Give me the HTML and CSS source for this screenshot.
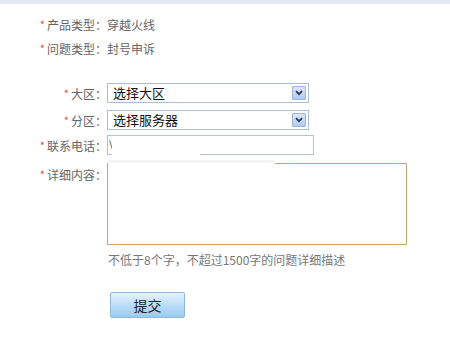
FILE: index.html
```html
<!DOCTYPE html>
<html lang="zh-CN">
<head>
<meta charset="utf-8">
<link rel="stylesheet" href="styles.css">
</head>
<body>
<div class="topbar"></div>
<div class="form">
  <div class="row info first">
    <div class="label"><span class="star">*</span>产品类型：</div>
    <div class="value">穿越火线</div>
  </div>
  <div class="row info">
    <div class="label"><span class="star">*</span>问题类型：</div>
    <div class="value">封号申诉</div>
  </div>
  <div class="row ctl sel1">
    <div class="label"><span class="star">*</span>大区：</div>
    <div class="select">
      <span class="sel-text">选择大区</span>
      <span class="arrow"><svg width="8" height="6" viewBox="0 0 8 6"><path d="M1 1.2 L4 4.2 L7 1.2" fill="none" stroke="#2d3a55" stroke-width="1.8"/></svg></span>
    </div>
  </div>
  <div class="row ctl sel2">
    <div class="label"><span class="star">*</span>分区：</div>
    <div class="select">
      <span class="sel-text">选择服务器</span>
      <span class="arrow"><svg width="8" height="6" viewBox="0 0 8 6"><path d="M1 1.2 L4 4.2 L7 1.2" fill="none" stroke="#2d3a55" stroke-width="1.8"/></svg></span>
    </div>
  </div>
  <div class="row ctl phone-row">
    <div class="label"><span class="star">*</span>联系电话：</div>
    <div class="input"><span class="caret">\</span></div>
    <div class="mask mask-a"></div>
    <div class="mask mask-b"></div>
  </div>
  <div class="row area-row">
    <div class="label"><span class="star">*</span>详细内容：</div>
    <div class="textarea"></div>
  </div>
  <div class="row help-row">
    <div class="label"></div>
    <div class="help">不低于8个字，不超过1500字的问题详细描述</div>
  </div>
  <div class="row btn-row">
    <div class="label"></div>
    <button class="submit">提交</button>
  </div>
</div>
</body>
</html>
```
FILE: styles.css
```css
html, body {
  margin: 0;
  padding: 0;
  background: #ffffff;
  font-family: "Noto Sans CJK SC", "Noto Sans", sans-serif;
  font-size: 12px;
  color: #666666;
}
.topbar {
  height: 4px;
  background: #e3e9f0;
}
.form {
  padding-left: 36px;
  position: relative;
}
.row {
  display: flex;
  align-items: center;
  position: relative;
}
.label {
  width: 71px;
  flex: none;
  text-align: right;
  white-space: nowrap;
  color: #666;
}
.star {
  color: #e8504a;
  font-size: 11px;
  margin-right: 2px;
  position: relative;
  top: -1px;
}
.info {
  height: 24px;
}
.info.first {
  margin-top: 8px;
}
.info .value {
  color: #666;
}
.sel1 {
  margin-top: 23px;
}
.sel2 {
  margin-top: 7px;
}
.select {
  width: 202px;
  height: 20px;
  box-sizing: border-box;
  border: 1px solid #a9bfd4;
  display: flex;
  align-items: center;
  justify-content: space-between;
  padding: 0 2px 0 5px;
  color: #111;
  font-size: 13px;
}
.sel-text {
  line-height: 18px;
}
.arrow {
  width: 14px;
  height: 14px;
  box-sizing: border-box;
  border: 1px solid #9fb3d6;
  background: linear-gradient(#dbe6fb, #b5c9f1);
  display: flex;
  align-items: center;
  justify-content: center;
  border-radius: 1px;
}
.phone-row {
  margin-top: 5px;
}
.input {
  width: 207px;
  height: 20px;
  box-sizing: border-box;
  border: 1px solid #b3c3d3;
  color: #333;
  font-size: 12px;
  line-height: 16px;
  padding-left: 1px;
}
.caret {
  font-size: 11px;
}
.mask {
  position: absolute;
  background: #ffffff;
  z-index: 2;
}
.mask-a {
  left: 76px;
  top: 4px;
  width: 88px;
  height: 18px;
}
.mask-b {
  left: 72px;
  top: 22px;
  width: 167px;
  height: 10px;
  background: linear-gradient(#ffffff 0, #ffffff 3px, rgba(226, 226, 226, 0.7) 4px, #ffffff 6px, #ffffff 100%);
}
.area-row {
  margin-top: 8px;
  align-items: flex-start;
}
.area-row .label {
  margin-top: 3px;
}
.textarea {
  width: 300px;
  height: 82px;
  box-sizing: border-box;
  border: 1px solid #c8a666;
}
.help-row {
  margin-top: 6px;
  height: 16px;
}
.help {
  color: #777;
  padding-left: 1px;
}
.btn-row {
  margin-top: 25px;
}
.submit {
  margin-left: 3px;
  width: 75px;
  height: 26px;
  box-sizing: border-box;
  border: 1px solid #8fb8dd;
  border-radius: 2px;
  background: linear-gradient(#e4f2fd, #b9dcf7 55%, #9acbf2);
  font-family: "Noto Sans CJK SC", sans-serif;
  font-size: 14px;
  color: #222;
  padding: 0;
  line-height: 24px;
}
```
